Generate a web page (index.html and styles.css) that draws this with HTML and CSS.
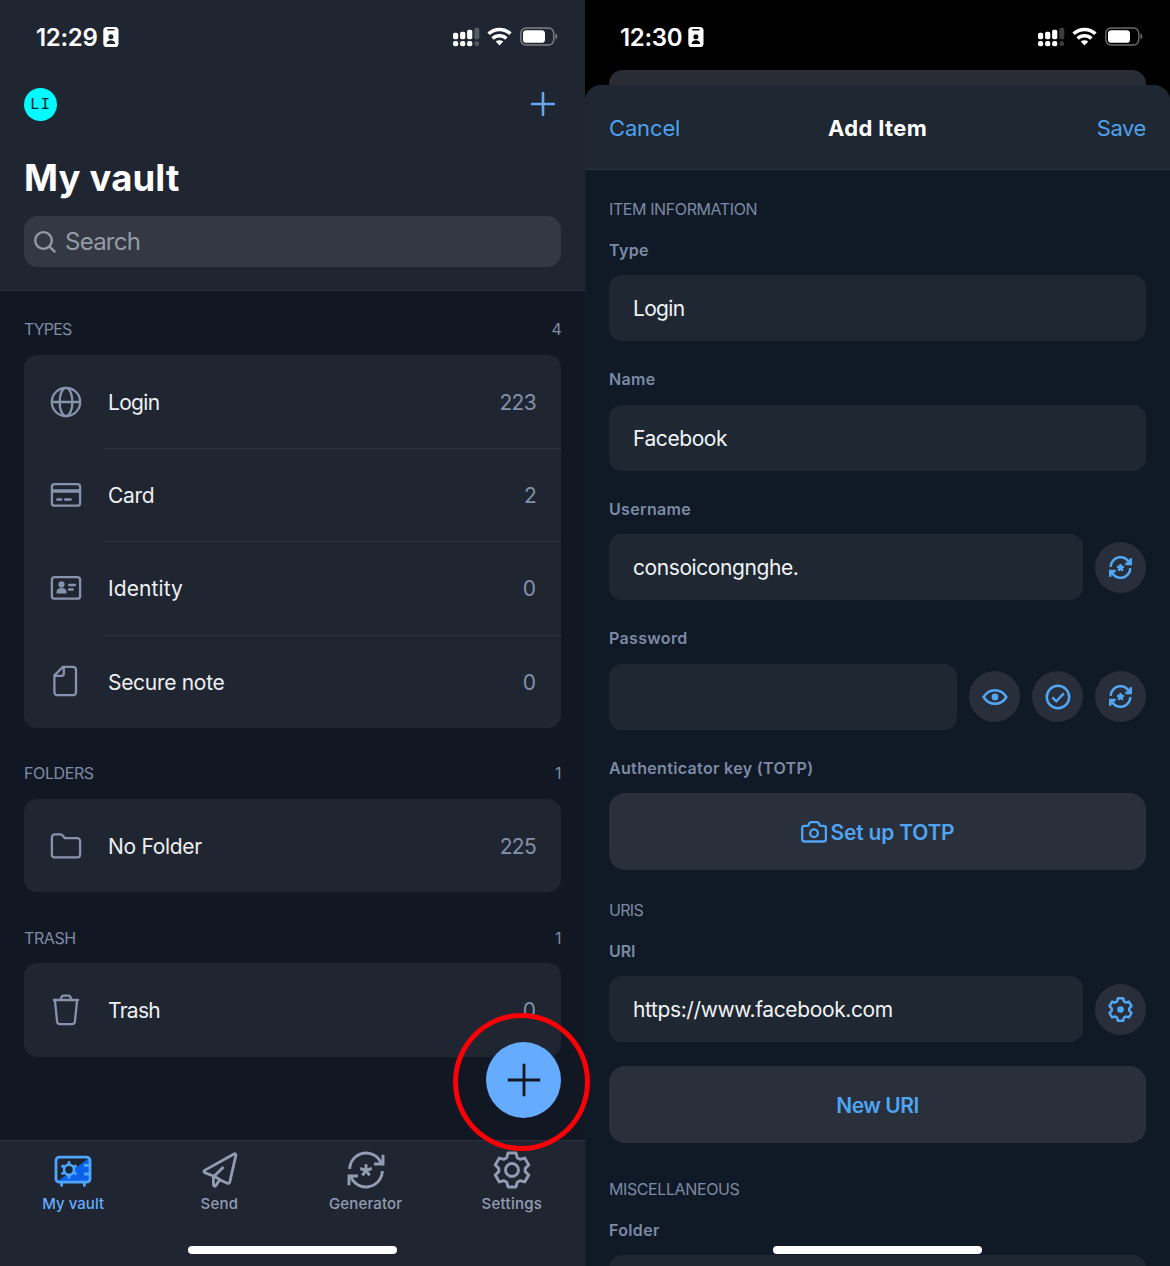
FILE: index.html
```html
<!DOCTYPE html>
<html lang="en">
<head>
<meta charset="utf-8">
<title>My vault</title>
<link rel="stylesheet" href="styles.css">
</head>
<body>
<svg class="defs" width="0" height="0" aria-hidden="true">
  <symbol id="badge" viewBox="0 0 16 20">
    <rect x="0.3" y="0" width="15.2" height="20" rx="3.6" fill="#fff"/>
    <path d="M4.8 2.7h6.2" stroke="var(--cut)" stroke-width="1.4" stroke-linecap="round"/>
    <circle cx="7.9" cy="9.7" r="2.5" fill="var(--cut)"/>
    <path d="M3.6 16.9c0-2.4 1.8-3.6 4.3-3.6s4.3 1.2 4.3 3.6z" fill="var(--cut)"/>
  </symbol>
  <symbol id="signal" viewBox="0 0 27 20">
    <g fill="#fff">
      <rect x="0" y="5.8" width="5.2" height="6.4" rx="1.8"/><rect x="7.1" y="4.8" width="5.2" height="7.4" rx="1.8"/><rect x="14.1" y="2.8" width="5.2" height="9.4" rx="1.8"/>
      <rect x="0" y="14" width="5.2" height="5.2" rx="2"/><rect x="7.1" y="14" width="5.2" height="5.2" rx="2"/><rect x="14.1" y="14" width="5.2" height="5.2" rx="2"/>
      <g opacity=".24"><rect x="21.3" y="0.8" width="5" height="11.4" rx="1.6"/><rect x="21.5" y="14.2" width="4.6" height="4.8" rx="2"/></g>
    </g>
  </symbol>
  <symbol id="wifi" viewBox="0 0 25 20">
    <g fill="none" stroke="#fff" stroke-width="3.5">
      <path d="M1.6 6.8a15.8 15.8 0 0 1 21.8 0"/>
      <path d="M5.6 11.4a10 10 0 0 1 13.8 0"/>
    </g>
    <path d="M12.5 18.6l-3.7-4a5.4 5.4 0 0 1 7.4 0z" fill="#fff"/>
  </symbol>
  <symbol id="battery" viewBox="0 0 38 20">
    <rect x=".8" y="1" width="33" height="17" rx="5.4" fill="none" stroke="#fff" stroke-opacity=".42" stroke-width="1.4"/>
    <rect x="3" y="3.2" width="22" height="12.6" rx="3.4" fill="#fff"/>
    <path d="M35.5 6.6c2.3.9 2.3 4.9 0 5.8z" fill="#fff" fill-opacity=".45"/>
  </symbol>
  <symbol id="refresh" viewBox="-19 -19 38 38">
    <g fill="none" stroke="currentColor">
      <path d="M-16.3-1A16.3 16.3 0 0 1 15.4-6M16.3 1A16.3 16.3 0 0 1-15.4 6"/>
      <path d="M17-15.2v9.2H8M-17 15.2V6h9"/>
      <path class="star" d="M0 .3V-5.8M0 .3l5.8-1.8M0 .3l3.6 5M0 .3l-3.6 5M0 .3l-5.8-1.8"/>
    </g>
  </symbol>
  <symbol id="arrowfill" viewBox="-19 -19 38 38">
    <path d="M18-15v10.500H8z M-18 15v-10.500H-8z" fill="currentColor" stroke="none"/>
  </symbol>
  <symbol id="gear" viewBox="-19 -19 38 38">
    <path fill="none" stroke="currentColor" stroke-linejoin="round" d="M-5.2-12.3L-4-17H4L5.2-12.3L8.05-10.65L12.72-11.96L16.72-5.04L13.25-1.65V1.65L16.72 5.04L12.72 11.96L8.05 10.65L5.2 12.3L4 17H-4L-5.2 12.3L-8.05 10.65L-12.72 11.96L-16.72 5.04L-13.25 1.65V-1.65L-16.72-5.04L-12.72-11.96L-8.05-10.65Z"/>
  </symbol>
</svg>

<main class="screens">
  <section class="phone vault">
    <header class="vault-header">
      <div class="status">
        <span class="time">12:29</span>
        <svg class="badge"><use href="#badge"/></svg>
        <svg class="signal"><use href="#signal"/></svg>
        <svg class="wifi"><use href="#wifi"/></svg>
        <svg class="battery"><use href="#battery"/></svg>
      </div>
      <div class="account">
        <span class="avatar">LI</span>
        <svg class="add" viewBox="0 0 24 24"><path d="M12 1v22M1 12h22"/></svg>
      </div>
      <h1>My vault</h1>
      <div class="search">
        <svg viewBox="0 0 22 22"><circle cx="9.500" cy="9.500" r="8.300"/><path d="M15.600 15.600l5 5"/></svg>
        <span>Search</span>
      </div>
    </header>

    <div class="vault-body">
      <div class="section-head types"><span>TYPES</span><span>4</span></div>
      <div class="group">
        <div class="row">
          <svg class="icon" viewBox="0 0 32 32"><circle cx="16" cy="16" r="14.200"/><ellipse cx="16" cy="16" rx="6.400" ry="14.200"/><path d="M1.700 16h28.600"/></svg>
          <div class="row-main"><span class="tight">Login</span><span class="count">223</span></div>
        </div>
        <div class="row">
          <svg class="icon" viewBox="0 0 32 32"><rect x="1.900" y="5.100" width="28.200" height="21.600" rx="2.800"/><path d="M2 12h28" stroke-width="3.600"/><path d="M7.400 20.500h3.800M15.200 20.500h5.400" stroke-width="2.600" stroke-linecap="round"/></svg>
          <div class="row-main"><span>Card</span><span class="count">2</span></div>
        </div>
        <div class="row">
          <svg class="icon" viewBox="0 0 32 32"><rect x="1.900" y="5.100" width="28.200" height="21.600" rx="2.800"/><g class="solid"><circle cx="11.500" cy="12.400" r="3.100"/><path d="M6.600 21.400v-1.600c0-2.600 2-3.800 4.900-3.800s4.900 1.200 4.900 3.800v1.600z"/></g><path d="M19.200 13h5.600M19.200 17.600h3.400" stroke-width="2.500" stroke-linecap="round"/></svg>
          <div class="row-main"><span class="wide">Identity</span><span class="count zero">0</span></div>
        </div>
        <div class="row">
          <svg class="icon" viewBox="0 0 32 32"><path d="M13 1.800h10a3 3 0 0 1 3 3v22.400a3 3 0 0 1-3 3H7.400a3 3 0 0 1-3-3V10.400zM13.800 2v6.600a2.200 2.200 0 0 1-2.200 2.200H4.800"/></svg>
          <div class="row-main"><span>Secure note</span><span class="count zero">0</span></div>
        </div>
      </div>

      <div class="section-head next"><span>FOLDERS</span><span>1</span></div>
      <div class="group">
        <div class="row">
          <svg class="icon" viewBox="0 0 32 32"><path d="M1.900 24.800V7.200a2.800 2.800 0 0 1 2.800-2.800h5.700c.9 0 1.700.4 2.300 1.100l2.200 2.700h12.400a2.800 2.800 0 0 1 2.800 2.800v13.800a2.500 2.500 0 0 1-2.500 2.500H4.400a2.500 2.500 0 0 1-2.500-2.500z"/></svg>
          <div class="row-main"><span>No Folder</span><span class="count">225</span></div>
        </div>
      </div>

      <div class="section-head next"><span>TRASH</span><span>1</span></div>
      <div class="group">
        <div class="row">
          <svg class="icon" viewBox="0 0 32 32"><path d="M2.900 6h26.200M4.900 6l2.200 21.500a3 3 0 0 0 3 2.700h11.800a3 3 0 0 0 3-2.700L27.100 6M10.700 5.800c.4-3 1.500-4.200 3.200-4.200h4.200c1.700 0 2.800 1.200 3.200 4.200"/></svg>
          <div class="row-main"><span class="tight">Trash</span><span class="count zero">0</span></div>
        </div>
      </div>
    </div>

    <div class="fab"><svg viewBox="0 0 34 34"><path d="M17 .8v32.400M.8 17h32.400"/></svg></div>
    <div class="highlight"></div>

    <nav class="tabs">
      <div class="tab active">
        <svg viewBox="0 0 38 38">
          <path d="M4 30L35 7v23z" fill="#0b62ea"/>
          <rect x="2" y="6.200" width="34" height="25" rx="3.200" class="line"/>
          <path d="M7.600 31.500v4M30.400 31.500v4M30 14.400h6M30 23h6" class="line"/>
          <path d="M15 10.200v17.200M7.500 14.500l15 8.600M7.500 23.100l15-8.600" class="line"/>
          <circle cx="15" cy="18.800" r="5" fill="#1a2638" stroke="currentColor" stroke-width="2.600"/>
        </svg>
        <span>My vault</span>
      </div>
      <div class="tab">
        <svg viewBox="0 0 38 38"><path class="line" d="M34 3L4.600 19.400c-1 .6-.9 1.700.1 2.200l8.700 3.400v8.600c0 1.700 1.600 2.200 2.600.9l3.600-5.800 7.800 3.500c1.200.5 2.200 0 2.400-1.200L35.900 4.300c.2-1.300-.8-1.900-1.900-1.300zM23.500 16l-9.400 9.200M14 25.200l6 3.200"/></svg>
        <span>Send</span>
      </div>
      <div class="tab">
        <svg class="gen"><use href="#refresh"/></svg>
        <span class="long">Generator</span>
      </div>
      <div class="tab">
        <svg class="gen" viewBox="-19 -19 38 38"><use href="#gear" x="-19" y="-19" width="38" height="38"/><circle r="6.500" fill="none" stroke="currentColor"/></svg>
        <span>Settings</span>
      </div>
    </nav>
    <div class="home"></div>
  </section>

  <section class="phone editor">
    <div class="status">
      <span class="time">12:30</span>
      <svg class="badge"><use href="#badge"/></svg>
      <svg class="signal"><use href="#signal"/></svg>
      <svg class="wifi"><use href="#wifi"/></svg>
      <svg class="battery"><use href="#battery"/></svg>
    </div>
    <div class="sheet-behind"></div>
    <div class="sheet">
      <header class="sheet-header">
        <span class="action">Cancel</span>
        <h2>Add Item</h2>
        <span class="action save">Save</span>
      </header>
      <div class="form">
        <h3>ITEM INFORMATION</h3>
        <label>Type</label>
        <div class="line-row"><div class="field tight">Login</div></div>
        <label>Name</label>
        <div class="line-row"><div class="field">Facebook</div></div>
        <label>Username</label>
        <div class="line-row">
          <div class="field">consoicongnghe.</div>
          <div class="round"><svg class="small"><use href="#refresh"/><use href="#arrowfill"/></svg></div>
        </div>
        <label>Password</label>
        <div class="line-row">
          <div class="field"></div>
          <div class="round"><svg class="eye" viewBox="0 0 26 18"><path d="M1.600 9C4 5 8 2.200 13 2.200S22 5 24.400 9C22 13 18 15.800 13 15.800S4 13 1.600 9z"/><circle cx="13" cy="9" r="3.400"/></svg></div>
          <div class="round"><svg class="check" viewBox="0 0 26 26"><circle cx="13" cy="13" r="11.200"/><path d="M7.300 13.300l4 4 7.500-8"/></svg></div>
          <div class="round"><svg class="small"><use href="#refresh"/><use href="#arrowfill"/></svg></div>
        </div>
        <label>Authenticator key (TOTP)</label>
        <div class="button">
          <svg viewBox="0 0 26 22"><path d="M3.300 4.800h3.200c.7 0 1-.3 1.200-.9l.5-1.400c.3-.8.800-1.300 1.700-1.300h6.300c.9 0 1.400.5 1.700 1.300l.5 1.400c.2.6.5.9 1.200.9h3.200c1.200 0 2.100.9 2.100 2.100v11.500c0 1.200-.9 2.100-2.100 2.100H3.300c-1.200 0-2.100-.9-2.100-2.100V6.900c0-1.200.9-2.100 2.100-2.100z"/><circle cx="13" cy="12.200" r="3.900"/></svg>
          <span>Set up TOTP</span>
        </div>
        <h3 class="uris">URIS</h3>
        <label class="uri">URI</label>
        <div class="line-row uri-row">
          <div class="field url">https://www.facebook.com</div>
          <div class="round"><svg class="small cog" viewBox="-19 -19 38 38"><use href="#gear" x="-19" y="-19" width="38" height="38"/><circle r="5" fill="currentColor" stroke="none"/></svg></div>
        </div>
        <div class="button new-uri"><span>New URI</span></div>
        <h3 class="misc">MISCELLANEOUS</h3>
        <label>Folder</label>
        <div class="line-row"><div class="field"></div></div>
      </div>
    </div>
    <div class="home"></div>
  </section>
</main>
</body>
</html>
```
FILE: styles.css
```css
* { box-sizing: border-box; }
body { margin: 0; background: #000; font-family: Inter, "Liberation Sans", sans-serif; }
svg { display: block; flex: none; }
.defs { position: absolute; }
h1, h2, h3 { margin: 0; }

.screens { display: grid; grid-template-columns: 585px 585px; width: 1170px; height: 1266px; overflow: hidden; }
.phone { position: relative; display: flex; flex-direction: column; height: 1266px; }
.vault { z-index: 1; background: #111824; --cut: #202631; }
.editor { background: #000; overflow: hidden; --cut: #000; }

/* status bar */
.status { display: flex; align-items: center; height: 70px; padding: 4.5px 27px 0 36px; flex: none; }
.editor .status { padding-left: 35px; }
.time { font-size: 24px; font-weight: 600; letter-spacing: -0.3px; color: #fff; line-height: 31px; }
.badge { width: 16px; height: 20px; margin: 0 auto 0 5px; }
.editor .badge { margin-left: 6px; }
.signal { width: 27px; height: 20px; margin-right: 7px; }
.wifi { width: 25px; height: 20px; margin-right: 8px; }
.battery { width: 38px; height: 20px; }

/* vault header */
.vault-header { height: 291px; background: #202631; border-bottom: 1px solid #2c3340; flex: none; }
.account { display: flex; align-items: center; justify-content: space-between; height: 68px; padding: 0 30.5px 0 24px; }
.avatar { width: 33px; height: 33px; border-radius: 50%; background: #00fcff; color: #08222b; font: 16px/34px "Liberation Mono", monospace; letter-spacing: .8px; text-align: center; }
.add { width: 24px; height: 24px; fill: none; stroke: #62a7f5; stroke-width: 2.6; stroke-linecap: round; }
h1 { height: 78px; padding: 18px 24px 0; font-size: 36.5px; line-height: 44px; font-weight: 700; letter-spacing: .15px; color: #fff; }
.search { display: flex; align-items: center; gap: 9px; height: 51px; margin: 0 24px; padding-left: 10px; border-radius: 14px; background: #333843; color: #959ba6; font-size: 24px; letter-spacing: -.75px; }
.search svg { width: 22px; height: 22px; fill: none; stroke: #959ba6; stroke-width: 2.3; stroke-linecap: round; }

/* vault list */
.vault-body { flex: 1; padding: 0 24px; }
.section-head { display: flex; justify-content: space-between; padding: 28px 0 16px; font-size: 16px; line-height: 20px; letter-spacing: -.4px; color: #7f8ba3; }
.section-head.types { letter-spacing: -.85px; }
.section-head.next { padding: 35.6px 0 15.6px; }
.group { border-radius: 13px; background: #202631; overflow: hidden; }
.row { display: flex; align-items: center; height: 93.2px; padding-left: 26px; }
.row-main { display: flex; flex: 1; align-items: center; justify-content: space-between; height: 100%; margin-left: 22px; padding: 1px 25px 0 4px; font-size: 21px; letter-spacing: -.3px; color: #eef0f3; }
.row + .row .row-main { border-top: 1px solid #2c3340; }
.tight { letter-spacing: -.7px !important; }
.wide { letter-spacing: .1px; }
.count { color: #8290aa; letter-spacing: -.7px; }
.zero { letter-spacing: 0; }
.icon { width: 32px; height: 32px; fill: none; stroke: #8793ac; stroke-width: 2.3; stroke-linejoin: round; }
.solid { fill: #8793ac; stroke: none; }

.fab { position: absolute; left: 486px; top: 1042px; width: 75px; height: 76px; border-radius: 50%; background: #65abff; display: grid; place-items: center; }
.fab svg { width: 34px; height: 34px; fill: none; stroke: #111824; stroke-width: 2.8; }
.highlight { position: absolute; z-index: 2; left: 453px; top: 1013px; width: 137px; height: 138px; border: 5px solid #fb0007; border-radius: 50%; }

.tabs { display: grid; grid-template-columns: repeat(4, 1fr); height: 126px; padding-top: 10px; border-top: 1px solid #2c3340; background: #202631; flex: none; }
.tab { display: flex; flex-direction: column; align-items: center; gap: 5px; color: #929db2; font-size: 15px; line-height: 20px; font-weight: 500; letter-spacing: .28px; }
.tab svg { width: 38px; height: 38px; stroke-width: 2.9; }
.tab .long { letter-spacing: .15px; }
.tab.active { color: #65abff; letter-spacing: .05px; }
.tab.active svg { color: #4ea6fb; }
.line { fill: none; stroke: currentColor; stroke-width: 2.8; stroke-linejoin: round; }
.tab .star { stroke-width: 2.8; }

.home { position: absolute; left: 188px; bottom: 12px; width: 209px; height: 8px; border-radius: 4px; background: #fff; }

/* item editor */
.sheet-behind { height: 30px; margin: 0 24px -15px; border-radius: 14px 14px 0 0; background: #292c35; flex: none; }
.sheet { position: relative; flex: none; height: 1181px; border-radius: 16px 16px 0 0; background: #101926; overflow: hidden; }
.sheet-header { display: grid; grid-template-columns: 1fr auto 1fr; align-items: center; height: 85px; padding: 1px 24px 0; background: #1f2732; border-bottom: 1px solid #2c3440; }
.action { font-size: 22px; letter-spacing: -.15px; color: #4da1ed; }
.save { text-align: right; letter-spacing: -.4px; }
h2 { font-size: 22px; font-weight: 700; letter-spacing: .35px; color: #fff; }
.form { padding: 29px 24px 0; }
h3 { margin-bottom: 20.9px; font-size: 16px; line-height: 20px; font-weight: 400; letter-spacing: -.4px; color: #7b8ba4; }
label { display: block; margin-bottom: 15.5px; font-size: 16px; line-height: 20px; font-weight: 600; letter-spacing: .34px; color: #7b8ba6; }
.line-row { display: flex; align-items: center; gap: 12px; margin-bottom: 28px; }
.field { flex: 1; height: 66px; padding: 0 24px; border-radius: 13px; background: #1f2832; color: #f1f3f5; font-size: 21px; line-height: 67px; letter-spacing: -.42px; }
.url { letter-spacing: -.38px; }
.round { display: grid; place-items: center; width: 51px; height: 51px; border-radius: 50%; background: #282e3a; color: #52a7f3; }
.round svg { fill: none; stroke: #52a7f3; stroke-width: 2.5; }
.round .small { width: 23px; height: 23px; stroke-width: 4.2; }
.round .star { stroke-width: 3.4; }
.round .eye { width: 26px; height: 18px; }
.round .check { width: 26px; height: 26px; }
.round .eye circle { fill: #52a7f3; stroke: none; }
.round .cog { width: 25px; height: 25px; stroke-width: 3.8; }
.button { display: flex; align-items: center; justify-content: center; gap: 4px; height: 76.5px; padding-top: 1px; border-radius: 16px; background: #292f3b; color: #4fa5f2; font-size: 21px; font-weight: 600; letter-spacing: -.2px; }
.button svg { width: 26px; height: 22px; fill: none; stroke: #4fa5f2; stroke-width: 2.3; }
.uris { margin-top: 30px; letter-spacing: -.7px; }
.uri { letter-spacing: -.1px; }
.uri-row { margin-bottom: 24px; }
.new-uri { letter-spacing: -.5px; }
.misc { margin-top: 36px; }
```
